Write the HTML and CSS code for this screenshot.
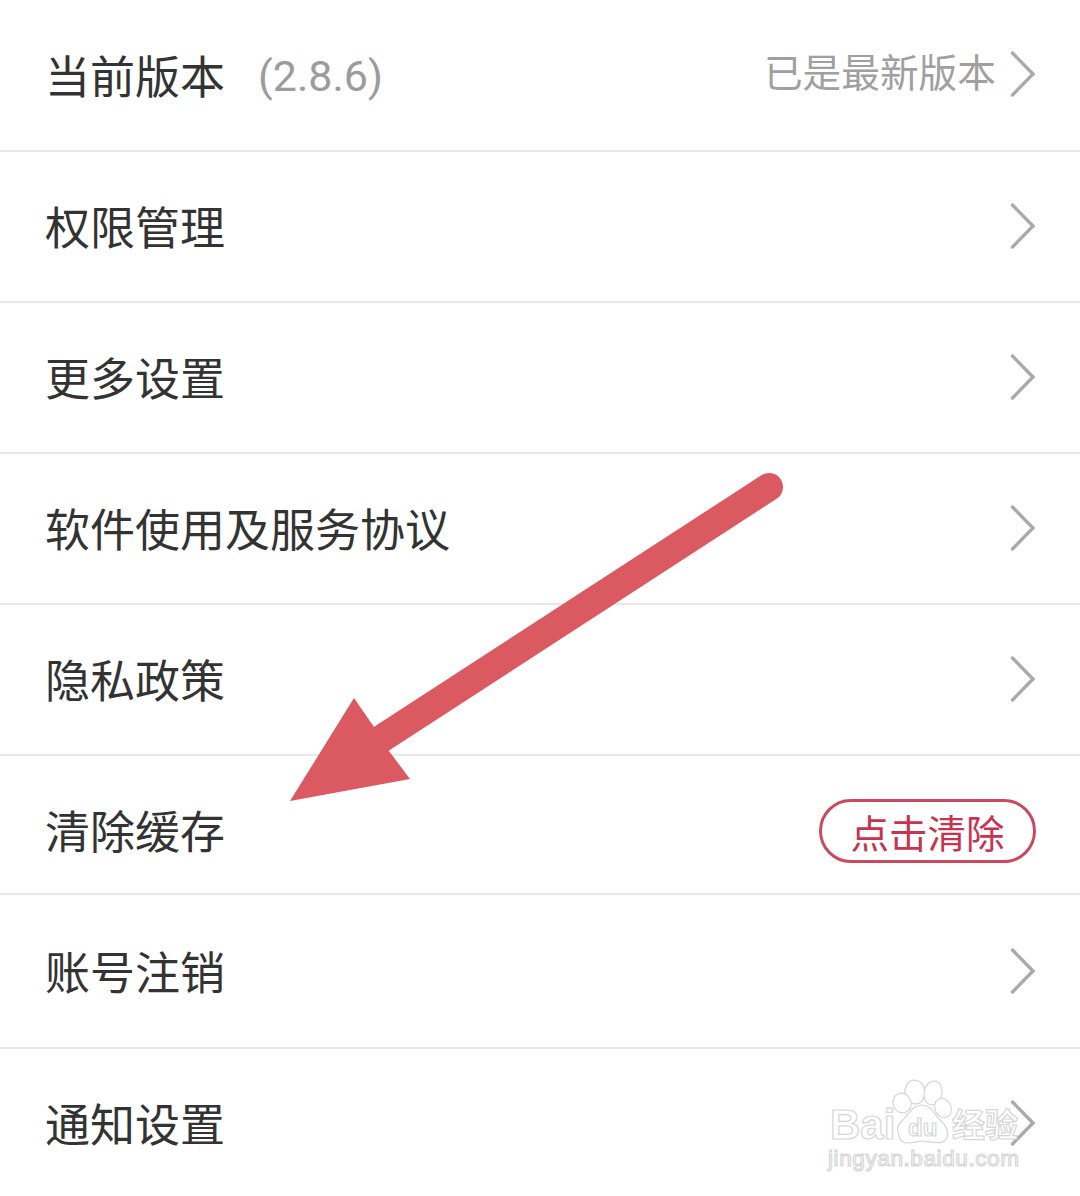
FILE: index.html
```html
<!doctype html>
<html>

<head>
    <meta charset="UTF-8">
    <meta name="viewport" content="width=device-width, initial-scale=1.0">
    <link rel="stylesheet" href="styles.css">
    <title>设置</title>
</head>

<body>
    <div class="list">
        <div class="row row-first">
            <div class="row-left">
                <span class="row-title">当前版本</span>
                <span class="version">(2.8.6)</span>
            </div>
            <div class="row-right">
                <span class="status">已是最新版本</span>
                <svg class="chevron" viewBox="0 0 28 48"><path d="M4.5 3 L25 24 L4.5 45" /></svg>
            </div>
        </div>
        <div class="row">
            <span class="row-title">权限管理</span>
            <svg class="chevron" viewBox="0 0 28 48"><path d="M4.5 3 L25 24 L4.5 45" /></svg>
        </div>
        <div class="row">
            <span class="row-title">更多设置</span>
            <svg class="chevron" viewBox="0 0 28 48"><path d="M4.5 3 L25 24 L4.5 45" /></svg>
        </div>
        <div class="row">
            <span class="row-title">软件使用及服务协议</span>
            <svg class="chevron" viewBox="0 0 28 48"><path d="M4.5 3 L25 24 L4.5 45" /></svg>
        </div>
        <div class="row">
            <span class="row-title">隐私政策</span>
            <svg class="chevron" viewBox="0 0 28 48"><path d="M4.5 3 L25 24 L4.5 45" /></svg>
        </div>
        <div class="row row-short">
            <span class="row-title">清除缓存</span>
            <span class="clear-button">点击清除</span>
        </div>
        <div class="row row-tall">
            <span class="row-title">账号注销</span>
            <svg class="chevron" viewBox="0 0 28 48"><path d="M4.5 3 L25 24 L4.5 45" /></svg>
        </div>
        <div class="row row-last">
            <span class="row-title">通知设置</span>
            <svg class="chevron" viewBox="0 0 28 48"><path d="M4.5 3 L25 24 L4.5 45" /></svg>
        </div>
    </div>

    <!-- red arrow drawn over the list -->
    <svg class="arrow" viewBox="0 0 1080 1196">
        <path class="arrow-shaft" d="M769 487 L381 739" />
        <path class="arrow-head" d="M290 801 L354 698 L374 727 L389 751 L410 779 Z" />
    </svg>

    <!-- baidu jingyan watermark -->
    <svg class="watermark" viewBox="0 0 280 136">
        <g class="paw">
            <ellipse cx="115" cy="32" rx="10" ry="12" transform="rotate(-8 115 32)" />
            <ellipse cx="133" cy="33" rx="9" ry="12" transform="rotate(10 133 33)" />
            <ellipse cx="102" cy="43" rx="9" ry="10" transform="rotate(-25 102 43)" />
            <ellipse cx="143" cy="48" rx="8" ry="10" transform="rotate(-25 143 48)" />
            <path d="M122 45 C112 45 108 56 101 62 C95 67 98 72 100 79 C104 86 112 82 122 81 C134 82 144 86 147 77 C149 70 146 65 140 60 C134 55 132 45 122 45 Z" />
        </g>
        <text class="wm-bai" x="30" y="79">Bai</text>
        <text class="wm-du" x="108" y="76">du</text>
        <text class="wm-cn" x="152" y="77">经验</text>
        <text class="wm-url" x="28" y="106">jingyan.baidu.com</text>
    </svg>
</body>

</html>
```

FILE: styles.css
```css
body {
    margin: 0;
    background: #ffffff;
    font-family: "Noto Sans CJK SC", "Noto Sans", sans-serif;
    overflow: hidden;
}

.list {
    height: 1196px;
    display: flex;
    flex-direction: column;
}

.row {
    height: 151px;
    box-sizing: border-box;
    flex-shrink: 0;
    padding: 0 44px 2px 45px;
    display: flex;
    align-items: center;
    justify-content: space-between;
    border-bottom: 2px solid #e8e8e8;
}

.row-first {
    height: 152px;
    padding-bottom: 0;
}

.row-short {
    height: 139px;
    padding-top: 11px;
    padding-bottom: 0;
}

.row-tall {
    height: 154px;
    padding-bottom: 0;
}

.row-last {
    height: 148px;
    padding-bottom: 0;
    border-bottom: none;
}

.row-left {
    display: flex;
    align-items: center;
    gap: 33px;
}

.row-right {
    display: flex;
    align-items: center;
    gap: 12px;
    margin-top: -2px;
}

.row-title {
    font-size: 45px;
    line-height: 60px;
    color: #333333;
}

.version {
    font-family: Roboto, sans-serif;
    font-size: 43px;
    line-height: 60px;
    color: #9c9c9c;
    margin-top: 2px;
}

.status {
    font-size: 38.7px;
    line-height: 50px;
    color: #a0a0a0;
    margin-bottom: 9px;
}

.chevron {
    width: 28px;
    height: 48px;
    flex-shrink: 0;
}

.chevron path {
    fill: none;
    stroke: #aaaaaa;
    stroke-width: 3.4;
    stroke-linecap: round;
    stroke-linejoin: miter;
}

.clear-button {
    width: 217px;
    height: 64px;
    box-sizing: border-box;
    margin-top: 2px;
    border: 3px solid #c94a60;
    border-radius: 32px;
    display: flex;
    align-items: center;
    justify-content: center;
    font-size: 38.5px;
    color: #c8334f;
}

.arrow {
    position: absolute;
    left: 0;
    top: 0;
    width: 1080px;
    height: 1196px;
}

.arrow-shaft {
    fill: none;
    stroke: #db5960;
    stroke-width: 28;
    stroke-linecap: round;
}

.arrow-head {
    fill: #db5960;
}

.watermark {
    position: absolute;
    left: 800px;
    top: 1060px;
    width: 280px;
    height: 136px;
    font-family: "Liberation Sans", sans-serif;
}

.watermark text {
    fill: #ffffff;
    stroke: #d6d6d6;
    stroke-width: 1.2;
}

.paw ellipse,
.paw path {
    fill: #ffffff;
    stroke: #d6d6d6;
    stroke-width: 1.2;
}

.wm-bai {
    font-size: 42px;
    font-weight: bold;
}

.wm-du {
    font-size: 24px;
    font-weight: bold;
}

.wm-cn {
    font-family: "Noto Sans CJK SC", sans-serif;
    font-size: 33px;
    font-weight: bold;
}

.wm-url {
    font-size: 22.5px;
    letter-spacing: 0.6px;
}
```
